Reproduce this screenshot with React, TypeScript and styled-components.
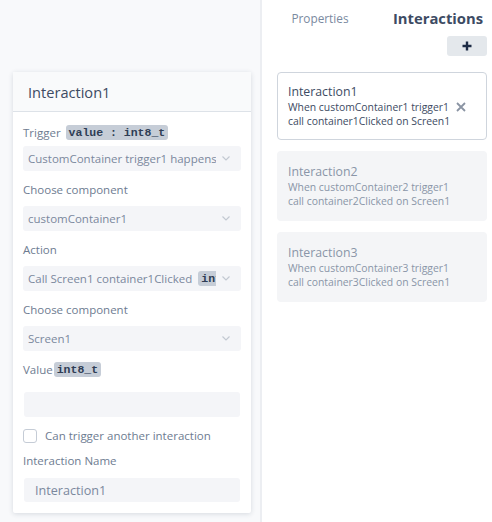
import React from "react";
import styled, { createGlobalStyle } from "styled-components";

const Global = createGlobalStyle`
  html, body { margin: 0; padding: 0; }
  body {
    font-family: "Open Sans", "Noto Sans", sans-serif;
    background: #ffffff;
  }
  * { box-sizing: border-box; }
`;

const Page = styled.div`
  display: flex;
  width: 492px;
  height: 522px;
  overflow: hidden;
`;

const Canvas = styled.div`
  width: 262px;
  flex: none;
  background: #f8f9fb;
  padding: 72px 0 0 13px;
  border-right: 2px solid #eceef2;
`;

const Card = styled.div`
  width: 238px;
  background: #ffffff;
  border-radius: 2px;
  box-shadow: 0 1px 5px rgba(40, 55, 80, 0.16);
`;

const CardHeader = styled.div`
  height: 40px;
  display: flex;
  align-items: center;
  padding-left: 15px;
  background: #f9fafb;
  border-bottom: 1px solid #dde2e8;
  font-size: 14.6px;
  color: #3d4b63;
`;

const CardBody = styled.div`
  padding: 11px 11px 11px 10px;
  display: flex;
  flex-direction: column;
`;

const Label = styled.div<{ $mt?: number; $mb?: number }>`
  height: 18px;
  display: flex;
  align-items: center;
  gap: 5px;
  font-size: 11.5px;
  color: #6e7c91;
  margin-top: ${(p) => p.$mt ?? 9}px;
  margin-bottom: ${(p) => p.$mb ?? 8}px;
  white-space: nowrap;
`;

const Tight = styled.span`
  display: flex;
  align-items: center;
  gap: 1px;
`;

const Code = styled.span`
  display: inline-flex;
  align-items: center;
  height: 15px;
  padding: 0 3px;
  border-radius: 3px;
  background: #c6cdd7;
  color: #2f3d55;
  font-family: "Liberation Mono", "Courier New", monospace;
  font-weight: bold;
  font-size: 11.5px;
  white-space: pre;
  flex: none;
`;

const Select = styled.div`
  height: 25px;
  width: 218px;
  display: flex;
  align-items: center;
  background: #f4f5f8;
  border-radius: 3px;
  padding-left: 5px;
  font-size: 11.5px;
  color: #7b889d;
`;

const SelectValue = styled.div`
  flex: 1;
  min-width: 0;
  overflow: hidden;
  white-space: nowrap;
  display: flex;
  align-items: center;
  gap: 6px;
`;

const Chevron = styled.svg`
  flex: none;
  margin: 0 11px 0 6px;
  width: 8px;
  height: 5px;
`;

const Input = styled.div<{ $h?: number }>`
  height: ${(p) => p.$h ?? 25}px;
  width: 216px;
  margin-left: 1px;
  background: #f4f5f8;
  border-radius: 3px;
  padding-left: 11px;
  display: flex;
  align-items: center;
  font-size: 12.6px;
  color: #7b889d;
`;

const CheckRow = styled.label`
  margin-top: 10px;
  height: 17px;
  display: flex;
  align-items: center;
  gap: 8px;
  font-size: 11.5px;
  color: #6e7c91;
`;

const Box = styled.span`
  width: 14px;
  height: 14px;
  border: 1px solid #c5ccd6;
  border-radius: 3px;
  background: #fff;
  flex: none;
`;

const Side = styled.div`
  flex: 1;
  display: flex;
  flex-direction: column;
  padding: 0 5px 0 15px;
`;

const Tabs = styled.div`
  display: flex;
  height: 36px;
  margin-left: -15px;
  margin-right: -5px;
`;

const Tab = styled.div<{ $active?: boolean }>`
  flex: 1;
  display: flex;
  align-items: center;
  justify-content: center;
  padding-left: ${(p) => (p.$active ? 10 : 4)}px;
  padding-bottom: 1px;
  font-size: ${(p) => (p.$active ? 14.8 : 11.8)}px;
  font-weight: ${(p) => (p.$active ? 700 : 400)};
  color: ${(p) => (p.$active ? "#3d4b63" : "#7a8aa0")};
`;

const AddRow = styled.div`
  display: flex;
  justify-content: flex-end;
`;

const AddButton = styled.button`
  width: 40px;
  height: 20px;
  border: none;
  border-radius: 3px;
  background: #e4e8ec;
  display: flex;
  align-items: center;
  justify-content: center;
  padding: 0;
`;

const List = styled.div`
  margin-top: 16px;
  display: flex;
  flex-direction: column;
  gap: 11px;
`;

const Item = styled.div<{ $selected?: boolean }>`
  height: ${(p) => (p.$selected ? 68 : 70)}px;
  border-radius: 4px;
  padding: ${(p) => (p.$selected ? "11px 10px 0 10px" : "13px 11px 0 11px")};
  display: flex;
  align-items: flex-start;
  background: ${(p) => (p.$selected ? "#ffffff" : "#f4f5f7")};
  border: ${(p) => (p.$selected ? "1px solid #cfd5dd" : "none")};
  color: ${(p) => (p.$selected ? "#3d4b63" : "#8a96a8")};
`;

const ItemText = styled.div`
  flex: 1;
  white-space: nowrap;
`;

const ItemTitle = styled.div`
  font-size: 12.3px;
  line-height: 16px;
`;

const ItemLine = styled.div`
  font-size: 10.4px;
  line-height: 14px;
`;

const Close = styled.svg`
  margin: 18px 10px 0 0;
  width: 10px;
  height: 10px;
  flex: none;
`;

const ChevronIcon = () => (
  <Chevron viewBox="0 0 8 5">
    <path d="M0.5 0.5 L4 4 L7.5 0.5" fill="none" stroke="#c3c9d2" strokeWidth="1.2" />
  </Chevron>
);

const SelectBox: React.FC<{ children: React.ReactNode }> = ({ children }) => (
  <Select>
    <SelectValue>{children}</SelectValue>
    <ChevronIcon />
  </Select>
);

const items = [
  { n: 1, selected: true },
  { n: 2, selected: false },
  { n: 3, selected: false },
];

export default function App() {
  return (
    <>
      <Global />
      <Page>
        <Canvas>
          <Card>
            <CardHeader>Interaction1</CardHeader>
            <CardBody>
              <Label $mt={0} $mb={5}>
                Trigger <Code>value : int8_t</Code>
              </Label>
              <SelectBox>CustomContainer trigger1 happens</SelectBox>
              <Label>Choose component</Label>
              <SelectBox>customContainer1</SelectBox>
              <Label>Action</Label>
              <SelectBox>
                Call Screen1 container1Clicked <Code>int8_t</Code>
              </SelectBox>
              <Label>Choose component</Label>
              <SelectBox>Screen1</SelectBox>
              <Label $mb={14}>
                <Tight>
                  Value<Code>int8_t</Code>
                </Tight>
              </Label>
              <Input />
              <CheckRow>
                <Box />
                Can trigger another interaction
              </CheckRow>
              <Label $mt={7} $mb={9}>Interaction Name</Label>
              <Input $h={24}>Interaction1</Input>
            </CardBody>
          </Card>
        </Canvas>
        <Side>
          <Tabs>
            <Tab>Properties</Tab>
            <Tab $active>Interactions</Tab>
          </Tabs>
          <AddRow>
            <AddButton>
              <svg width="10" height="10" viewBox="0 0 10 10">
                <path d="M5 0.5 V9.5 M0.5 5 H9.5" stroke="#1d2b45" strokeWidth="2.4" />
              </svg>
            </AddButton>
          </AddRow>
          <List>
            {items.map((it) => (
              <Item key={it.n} $selected={it.selected}>
                <ItemText>
                  <ItemTitle>Interaction{it.n}</ItemTitle>
                  <ItemLine>When customContainer{it.n} trigger1</ItemLine>
                  <ItemLine>call container{it.n}Clicked on Screen1</ItemLine>
                </ItemText>
                {it.selected && (
                  <Close viewBox="0 0 10 10">
                    <path d="M1 1 L9 9 M9 1 L1 9" stroke="#8a94a3" strokeWidth="1.8" />
                  </Close>
                )}
              </Item>
            ))}
          </List>
        </Side>
      </Page>
    </>
  );
}
